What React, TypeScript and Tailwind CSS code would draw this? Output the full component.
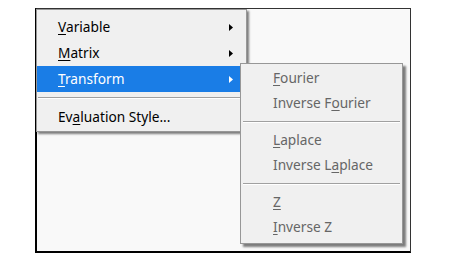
import React from 'react';

const font = { fontFamily: '"Noto Sans", "Open Sans", sans-serif' };

function Arrow() {
    return (
        <svg width="4" height="7" viewBox="0 0 4 7" className="shrink-0">
            <path d="M0 0 L4 3.5 L0 7 Z" fill="currentColor" />
        </svg>
    );
}

function Item({ pre = '', k, post = '', arrow = false, active = false }: { pre?: string; k: string; post?: string; arrow?: boolean; active?: boolean }) {
    return (
        <div className={`h-[26px] flex items-center pl-[21px] pr-[13px] ${active ? 'bg-[#1a7de6] text-white' : 'text-black'}`}>
            <span className="flex-1 whitespace-pre">
                {pre}<span className="underline underline-offset-2">{k}</span>{post}
            </span>
            {arrow && <Arrow />}
        </div>
    );
}

function SubItem({ pre = '', k, post = '' }: { pre?: string; k: string; post?: string }) {
    return (
        <div className="h-[25px] flex items-center pl-[32px] text-[#666666] whitespace-pre">
            {pre}<span className="underline underline-offset-2">{k}</span>{post}
        </div>
    );
}

function Sep({ className = '' }: { className?: string }) {
    return (
        <div className={`flex items-center ${className}`}>
            <div className="w-full border-t border-[#a0a0a0] border-b border-b-white" />
        </div>
    );
}

export default function App() {
    return (
        <div className="w-[455px] h-[272px] bg-white relative text-[13.7px]" style={font}>
            {/* picture frame */}
            <div className="absolute left-[35px] top-[8px] w-[376px] h-[245px] border border-[#333] border-l-2 border-b-2 border-l-black border-b-black bg-[#f9f9f9]" />

            {/* main menu */}
            <div className="absolute left-[36px] top-[9px] w-[211px] bg-[#f0f0f0] border border-[#979797] pt-[4px] pb-[1px] shadow-[2px_2px_2px_rgba(0,0,0,0.5)]">
                <Item k="V" post="ariable" arrow />
                <Item k="M" post="atrix" arrow />
                <Item k="T" post="ransform" arrow active />
                <Sep className="h-[12px] px-[1px]" />
                <Item pre="Ev" k="a" post="luation Style..." />
            </div>

            {/* submenu */}
            <div className="absolute left-[240px] top-[63px] w-[163px] bg-[#f0f0f0] border border-[#979797] pt-[2px] pb-[3px] shadow-[3px_3px_2px_rgba(0,0,0,0.5)]">
                <SubItem k="F" post="ourier" />
                <SubItem pre="Inverse F" k="o" post="urier" />
                <Sep className="h-[12px] px-[2px]" />
                <SubItem k="L" post="aplace" />
                <SubItem pre="Inverse L" k="a" post="place" />
                <Sep className="h-[12px] px-[2px]" />
                <SubItem k="Z" />
                <SubItem k="I" post="nverse Z" />
            </div>
        </div>
    );
}
